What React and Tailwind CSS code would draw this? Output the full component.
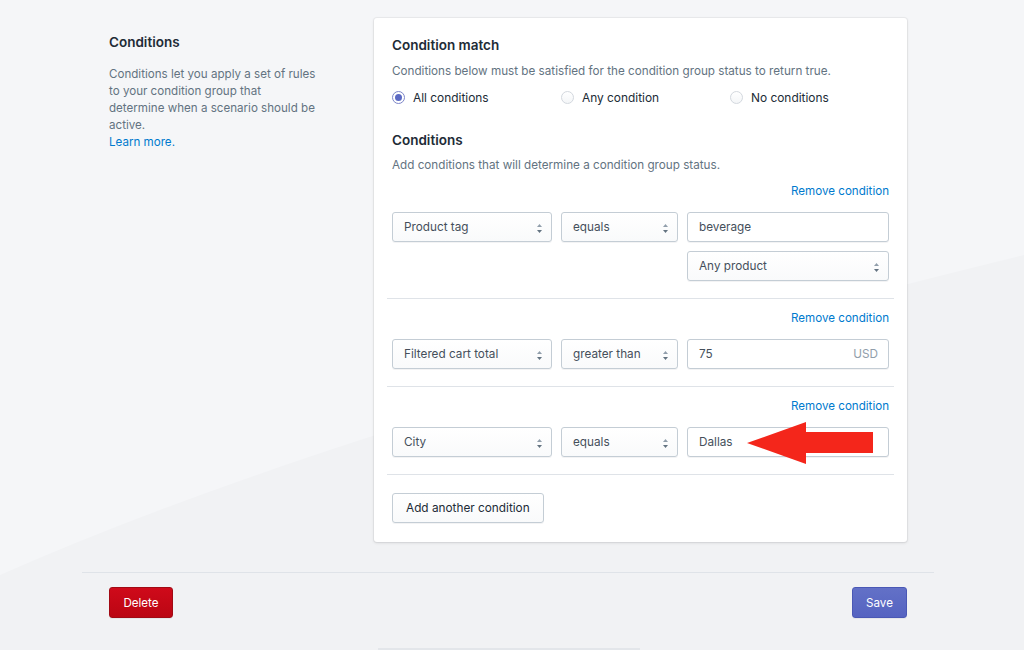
import { useState } from "react";

function Arrows() {
  return (
    <svg width="7" height="11" viewBox="0 0 7 11" className="shrink-0">
      <path d="M3.5 1 L6 4 L1 4 Z" fill="#919eab" />
      <path d="M3.5 10 L6 7 L1 7 Z" fill="#637381" />
    </svg>
  );
}

function Select({ value, className = "" }) {
  return (
    <div
      className={`flex h-[30px] items-center justify-between rounded-[3px] border border-[#c4cdd5] bg-linear-to-b from-white to-[#f9fafb] pl-[11px] pr-[8px] pt-[2px] text-[11.75px] text-[#454f5b] shadow-[0_1px_0_rgba(22,29,37,0.05)] ${className}`}
    >
      <span>{value}</span>
      <Arrows />
    </div>
  );
}

function TextInput({ value, suffix, className = "" }) {
  return (
    <div
      className={`flex h-[30px] items-center justify-between rounded-[3px] border border-[#c4cdd5] bg-white pl-[11px] pr-[10px] pt-[2px] text-[11.75px] text-[#454f5b] shadow-[0_1px_0_rgba(22,29,37,0.05)] ${className}`}
    >
      <span>{value}</span>
      {suffix && <span className="text-[#919eab]">{suffix}</span>}
    </div>
  );
}

function Radio({ label, checked, onClick }) {
  return (
    <button onClick={onClick} className="flex items-center gap-[8px] text-left">
      {checked ? (
        <span className="flex h-[13px] w-[13px] items-center justify-center rounded-full border border-[#7d86c9] bg-white">
          <span className="h-[7px] w-[7px] rounded-full bg-[#5c6ac4]" />
        </span>
      ) : (
        <span className="h-[13px] w-[13px] rounded-full border border-[#d3d8de] bg-linear-to-b from-white to-[#f4f6f8]" />
      )}
      <span className="text-[11.9px] text-[#212b36]">{label}</span>
    </button>
  );
}

function RemoveLink() {
  return (
    <div className="flex justify-end leading-[17px]">
      <a href="#" className="text-[11.6px] text-[#007ace]">
        Remove condition
      </a>
    </div>
  );
}

export default function App() {
  const [match, setMatch] = useState("all");

  return (
    <div className="relative min-h-[650px] overflow-hidden bg-[#f5f6f8] font-['Inter',sans-serif]">
      {/* background wave */}
      <svg
        className="pointer-events-none absolute inset-0"
        width="1024"
        height="650"
        viewBox="0 0 1024 650"
      >
        <path d="M0 575 Q350 420 1024 255 L1024 650 L0 650 Z" fill="#f1f2f4" />
      </svg>

      <div className="relative ml-[82px] w-[852px] pt-[18px]">
        <div className="flex px-[27px]">
          {/* Left annotation */}
          <div className="w-[266px] pt-[14px]">
            <h2 className="text-[13.5px] font-semibold leading-[20px] text-[#212b36]">
              Conditions
            </h2>
            <p className="mt-[14px] text-[11.6px] leading-[17px] text-[#637381]">
              Conditions let you apply a set of rules
              <br />
              to your condition group that
              <br />
              determine when a scenario should be
              <br />
              active.
              <br />
              <a href="#" className="text-[#007ace]">
                Learn more.
              </a>
            </p>
          </div>

          {/* Card */}
          <div className="w-[533px] rounded-[3px] bg-white px-[13px] pb-[19px] pt-[17px] shadow-[0_0_0_1px_rgba(63,63,68,0.05),0_1px_3px_0_rgba(63,63,68,0.15)]">
            <div className="px-[5px]">
              <h3 className="text-[13.5px] font-semibold leading-[20px] text-[#212b36]">
                Condition match
              </h3>
              <p className="mt-[8px] text-[11.7px] leading-[17px] text-[#637381]">
                Conditions below must be satisfied for the condition group status to return true.
              </p>
              <div className="mt-[8px] grid h-[20px] grid-cols-[169px_169px_169px] items-center">
                <Radio label="All conditions" checked={match === "all"} onClick={() => setMatch("all")} />
                <Radio label="Any condition" checked={match === "any"} onClick={() => setMatch("any")} />
                <Radio label="No conditions" checked={match === "none"} onClick={() => setMatch("none")} />
              </div>

              <h3 className="mt-[22px] text-[13.5px] font-semibold leading-[20px] text-[#212b36]">
                Conditions
              </h3>
              <p className="mt-[7px] text-[11.7px] leading-[17px] text-[#637381]">
                Add conditions that will determine a condition group status.
              </p>
            </div>

            {/* Condition 1 */}
            <div className="border-b border-[#dfe3e8] px-[5px] pb-[17px] pt-[9px]">
              <RemoveLink />
              <div className="mt-[12px] flex gap-[9px]">
                <Select value="Product tag" className="w-[160px]" />
                <Select value="equals" className="w-[117px]" />
                <div className="flex w-[202px] flex-col gap-[9px]">
                  <TextInput value="beverage" />
                  <Select value="Any product" />
                </div>
              </div>
            </div>

            {/* Condition 2 */}
            <div className="border-b border-[#dfe3e8] px-[5px] pb-[17px] pt-[11px]">
              <RemoveLink />
              <div className="mt-[12px] flex gap-[9px]">
                <Select value="Filtered cart total" className="w-[160px]" />
                <Select value="greater than" className="w-[117px]" />
                <TextInput value="75" suffix="USD" className="w-[202px]" />
              </div>
            </div>

            {/* Condition 3 */}
            <div className="border-b border-[#dfe3e8] px-[5px] pb-[17px] pt-[11px]">
              <RemoveLink />
              <div className="mt-[12px] flex gap-[9px]">
                <Select value="City" className="w-[160px]" />
                <Select value="equals" className="w-[117px]" />
                <div className="relative w-[202px]">
                  <TextInput value="Dallas" />
                  <svg
                    className="absolute left-[60px] top-[-6px]"
                    width="128"
                    height="44"
                    viewBox="0 0 128 44"
                  >
                    <path d="M0 22 L59 1 L59 11 L126 11 L126 32 L59 32 L59 43 Z" fill="#f4261b" />
                  </svg>
                </div>
              </div>
            </div>

            <div className="px-[5px] pt-[18px]">
              <button className="h-[30px] rounded-[3px] border border-[#c4cdd5] bg-linear-to-b from-white to-[#f9fafb] px-[13px] pt-[2px] text-[11.8px] text-[#212b36] shadow-[0_1px_0_rgba(22,29,37,0.05)]">
                Add another condition
              </button>
            </div>
          </div>
        </div>

        {/* Footer */}
        <div className="mt-[30px] border-t border-[#dfe3e8] px-[27px] pt-[14px]">
          <div className="flex justify-between">
            <button className="h-[31px] w-[64px] rounded-[3px] border border-[#a10a14] bg-linear-to-b from-[#cf0a1a] to-[#bb0613] pt-[2px] text-[11.6px] text-white shadow-[0_1px_0_rgba(22,29,37,0.05)]">
              Delete
            </button>
            <button className="h-[31px] w-[55px] rounded-[3px] border border-[#4a58b5] bg-linear-to-b from-[#6371c7] to-[#5563c1] pt-[2px] text-[11.6px] text-white shadow-[0_1px_0_rgba(22,29,37,0.05)]">
              Save
            </button>
          </div>
        </div>
      </div>

      <div className="absolute bottom-0 left-[378px] h-[2px] w-[262px] bg-[#e3e6ea]" />
    </div>
  );
}
